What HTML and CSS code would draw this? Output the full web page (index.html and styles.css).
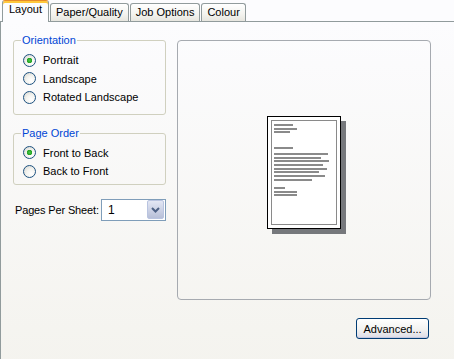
FILE: index.html
```html
<!DOCTYPE html>
<html lang="en">
<head>
  <meta charset="UTF-8">
  <title>Printing Preferences - Layout</title>
  <link rel="stylesheet" href="styles.css">
</head>
<body>
  <!-- Tab strip -->
  <div class="tabs">
    <div class="tab selected">Layout</div>
    <div class="tab">Paper/Quality</div>
    <div class="tab">Job Options</div>
    <div class="tab">Colour</div>
  </div>

  <!-- Tab page -->
  <div class="panel">
    <div class="left">
      <fieldset class="group orientation">
        <legend>Orientation</legend>
        <div class="radio checked"><span class="dot"></span>Portrait</div>
        <div class="radio"><span class="dot"></span>Landscape</div>
        <div class="radio"><span class="dot"></span>Rotated Landscape</div>
      </fieldset>

      <fieldset class="group page-order">
        <legend>Page Order</legend>
        <div class="radio checked"><span class="dot"></span>Front to Back</div>
        <div class="radio"><span class="dot"></span>Back to Front</div>
      </fieldset>

      <div class="per-sheet">
        <span class="label">Pages Per Sheet:</span>
        <div class="combo">
          <span class="value">1</span>
          <span class="arrow">
            <svg width="9" height="6" viewBox="0 0 9 6"><path d="M1 1 L4.5 4.5 L8 1" fill="none" stroke="#4d6185" stroke-width="2"/></svg>
          </span>
        </div>
      </div>
    </div>

    <div class="right">
      <div class="preview">
        <div class="sheet">
          <div class="page">
            <div class="line" style="width:19px"></div>
            <div class="line" style="width:23px"></div>
            <div class="line" style="width:16px"></div>
            <div class="line gap" style="width:19px"></div>
            <div class="line gap-s" style="width:54px"></div>
            <div class="line" style="width:47px"></div>
            <div class="line" style="width:55px"></div>
            <div class="line" style="width:49px"></div>
            <div class="line" style="width:53px"></div>
            <div class="line" style="width:45px"></div>
            <div class="line" style="width:51px"></div>
            <div class="line" style="width:38px"></div>
            <div class="line gap-m" style="width:11px"></div>
            <div class="line" style="width:23px"></div>
            <div class="line" style="width:23px"></div>
          </div>
        </div>
      </div>
      <div class="actions">
        <button class="btn">Advanced...</button>
      </div>
    </div>
  </div>
</body>
</html>
```

FILE: styles.css
```css
body {
  margin: 0;
  background: #fcfcfe;
  font-family: "Liberation Sans", Arial, sans-serif;
  font-size: 11px;
  color: #000;
  overflow: hidden;
}

/* Tabs */
.tabs {
  display: flex;
  align-items: flex-end;
  height: 21px;
  padding-left: 2px;
}

.tab {
  height: 17px;
  line-height: 16px;
  padding: 0 5px;
  margin-right: 1px;
  border: 1px solid #919b9c;
  border-bottom: none;
  border-radius: 3px 3px 0 0;
  background: linear-gradient(#ffffff, #f3f3ef 60%, #e7e6df);
}

.tab.selected {
  position: relative;
  height: 21px;
  line-height: 17px;
  padding: 0 6px;
  margin-bottom: -1px;
  border-top: 1px solid #e68b2c;
  box-shadow: inset 0 2px #ffc83c;
  background: #fcfcfe;
}

/* Tab page */
.panel {
  display: flex;
  gap: 11px;
  height: 337px;
  padding: 12px 0 0 12px;
  border-top: 1px solid #919b9c;
  border-left: 1px solid #919b9c;
  background: linear-gradient(#fcfcfe, #f4f3ee);
}

.left {
  width: 153px;
}

/* Group boxes */
.group {
  margin: 0;
  padding: 4px 0 7px 7px;
  border: 1px solid #d0d0bf;
  border-radius: 3px;
}

.group legend {
  padding: 0 1px;
  line-height: 13px;
  color: #0046d5;
}

.page-order {
  margin-top: 12px;
  padding-top: 4px;
  padding-bottom: 3px;
}

.radio {
  display: flex;
  align-items: center;
  height: 18.5px;
  margin-left: 2px;
}

.dot {
  width: 11px;
  height: 11px;
  margin-right: 7px;
  border: 1px solid #1c5180;
  border-radius: 50%;
  background: radial-gradient(circle at 65% 70%, #ffffff 0, #f3f3ef 45%, #d2d2cc 100%);
}

.radio.checked .dot {
  background: radial-gradient(circle, #4ac94a 0, #21a121 2.5px, transparent 3px),
              radial-gradient(circle at 65% 70%, #ffffff 0, #f3f3ef 45%, #d2d2cc 100%);
}

/* Pages per sheet */
.per-sheet {
  display: flex;
  align-items: center;
  justify-content: space-between;
  margin-top: 14px;
  padding-left: 2px;
}

.per-sheet .label {
  white-space: nowrap;
  letter-spacing: -0.15px;
}

.combo {
  flex-shrink: 0;
  display: flex;
  align-items: center;
  width: 63px;
  height: 20px;
  border: 1px solid #7f9db9;
  background: #fff;
}

.combo .value {
  flex: 1;
  padding-left: 6px;
  font-size: 12px;
}

.combo .arrow {
  display: flex;
  align-items: center;
  justify-content: center;
  width: 15px;
  height: 17px;
  margin-right: 1px;
  border: 1px solid #b9c4e0;
  border-radius: 2px;
  background: linear-gradient(#e3e7f4, #b7bfd8);
}

/* Preview */
.right {
  width: 254px;
}

.preview {
  display: flex;
  align-items: center;
  justify-content: center;
  height: 258px;
  margin-top: 6px;
  border: 1px solid #a6aab0;
  border-radius: 4px;
}

.sheet {
  box-sizing: border-box;
  width: 74px;
  height: 113px;
  margin-top: 5px;
  border: 1px solid #000;
  background: #fff;
  box-shadow: 5px 5px 0 #76787c;
  padding: 3px;
}

.page {
  height: 100%;
  box-sizing: border-box;
  border: 1px solid #8a8a8a;
  padding: 3px 0 0 2px;
}

.line {
  height: 2px;
  margin-bottom: 1.7px;
  background: #8a8a8a;
}

.line.gap {
  margin-top: 13.3px;
}

.line.gap-s {
  margin-top: 4.3px;
}

.line.gap-m {
  margin-top: 6.3px;
}

.actions {
  display: flex;
  justify-content: flex-end;
  margin-top: 18px;
  padding-right: 2px;
}

.btn {
  width: 73px;
  height: 21px;
  padding: 0;
  font-family: "Liberation Sans", Arial, sans-serif;
  font-size: 11px;
  color: #000;
  border: 1px solid #003c74;
  border-radius: 3px;
  background: linear-gradient(#ffffff, #f2f2f0 55%, #dcdbe6);
  box-shadow: inset 0 -1px #c6c8df;
}
```
